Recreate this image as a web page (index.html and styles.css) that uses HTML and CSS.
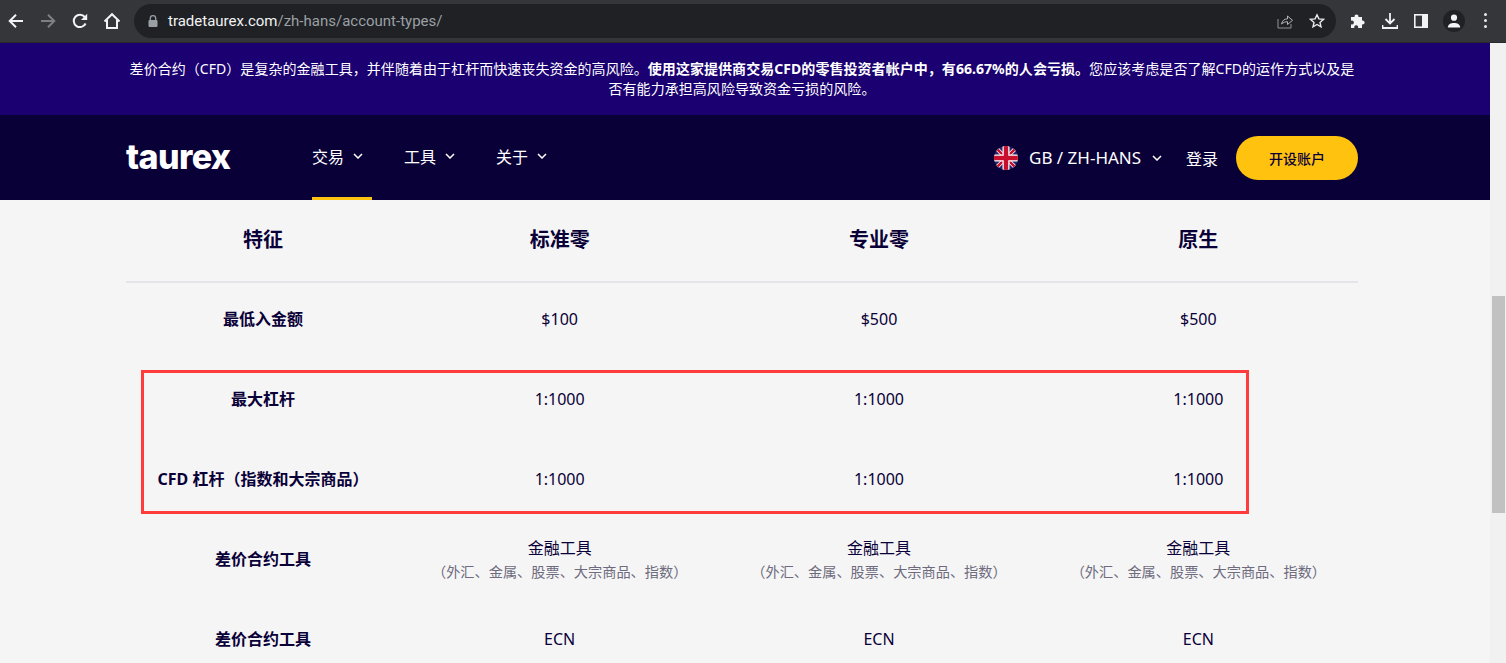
FILE: index.html
```html
<!DOCTYPE html>
<html lang="zh-Hans">
<head>
  <meta charset="UTF-8" />
  <title>Taurex - 账户类型</title>
  <link rel="stylesheet" href="styles.css">
</head>
<body>
  <div class="toolbar">
    <div class="tool-left">
      <svg class="tool" width="18" height="18" viewBox="0 0 18 18"><path d="M16 9H3M9 2.7 2.7 9 9 15.3" fill="none" stroke="#f1f3f4" stroke-width="2"/></svg>
      <svg class="tool" width="18" height="18" viewBox="0 0 18 18"><path d="M2 9h13M9 2.7 15.3 9 9 15.3" fill="none" stroke="#7d7f83" stroke-width="2"/></svg>
      <svg class="tool" width="18" height="18" viewBox="0 0 18 18"><path d="M14.6 11.5A6.2 6.2 0 1 1 13.8 5L15.5 6.8" fill="none" stroke="#f1f3f4" stroke-width="2"/><path d="M16.2 1.8v6.3H10z" fill="#f1f3f4"/></svg>
      <svg class="tool" width="18" height="18" viewBox="0 0 18 18"><path d="M1.5 9.5 9 2.2l7.5 7.3M4 8v8h10V8" fill="none" stroke="#f1f3f4" stroke-width="2"/></svg>
    </div>
    <div class="omnibox">
      <svg class="lock" width="10" height="12" viewBox="0 0 10 12"><path d="M2.3 5V3.4a2.7 2.7 0 0 1 5.4 0V5" fill="none" stroke="#9aa0a6" stroke-width="1.3"/><rect x="0.5" y="5" width="9" height="7" rx="1" fill="#9aa0a6"/></svg>
      <span class="url"><span class="url-host">tradetaurex.com</span>/zh-hans/account-types/</span>
      <svg class="omni-icon" width="16" height="16" viewBox="0 0 16 16"><path d="M1 6v9h13v-4" fill="none" stroke="#8f9398" stroke-width="1"/><path d="M4.500 11c.6-3.300 3-5.200 6-5.200V3l5 4.300-5 4.200V8.700c-2.200 0-4.200.7-6 2.300z" fill="none" stroke="#b5b8bc" stroke-width="1"/></svg>
      <svg class="omni-icon" width="16" height="16" viewBox="0 0 16 16"><path d="m8 1.800 1.900 4.100 4.500.5-3.400 3 1 4.400L8 11.500l-4 2.300 1-4.400-3.400-3 4.500-.5z" fill="none" stroke="#e8eaed" stroke-width="1.400"/></svg>
    </div>
    <div class="tool-right">
      <svg width="16" height="16" viewBox="0 0 16 16"><path d="M1 4h3.600a2 2 0 1 1 3.800 0H12v3.600a2 2 0 1 1 0 3.800V15H8a2 2 0 1 0-3.600 0H1v-3.700a2 2 0 1 0 0-3.600z" fill="#f1f3f4"/></svg>
      <svg width="16" height="16" viewBox="0 0 16 16"><path d="M8 0v10M3.500 6 8 10.500 12.500 6M0.500 12v3h15v-3" fill="none" stroke="#f1f3f4" stroke-width="1.800"/></svg>
      <svg width="14" height="14" viewBox="0 0 14 14"><rect x="0.800" y="0.800" width="12.400" height="12.400" fill="none" stroke="#f1f3f4" stroke-width="1.600"/><rect x="8" y="1" width="5" height="12" fill="#f1f3f4"/></svg>
      <span class="avatar">
        <svg width="14" height="14" viewBox="0 0 14 14"><circle cx="7" cy="3.700" r="3.100" fill="#f1f3f4"/><path d="M.8 13.500c0-3.200 3-4.500 6.200-4.500s6.200 1.300 6.200 4.500z" fill="#f1f3f4"/></svg>
      </span>
      <span class="dots"><i></i><i></i><i></i></span>
    </div>
  </div>

  <div class="viewport">
    <div class="page">
      <div class="risk">
        差价合约（CFD）是复杂的金融工具，并伴随着由于杠杆而快速丧失资金的高风险。<b>使用这家提供商交易CFD的零售投资者帐户中，有66.67%的人会亏损。</b>您应该考虑是否了解CFD的运作方式以及是否有能力承担高风险导致资金亏损的风险。
      </div>

      <div class="nav">
        <span class="logo">taurex</span>
        <div class="menu">
          <a class="menu-item active">交易 <svg class="chev" viewBox="0 0 10 6"><path d="M1 1l4 4 4-4" /></svg></a>
          <a class="menu-item">工具 <svg class="chev" viewBox="0 0 10 6"><path d="M1 1l4 4 4-4" /></svg></a>
          <a class="menu-item">关于 <svg class="chev" viewBox="0 0 10 6"><path d="M1 1l4 4 4-4" /></svg></a>
        </div>
        <div class="nav-right">
          <svg class="flag" width="24" height="24" viewBox="0 0 24 24">
            <defs><clipPath id="flagClip"><circle cx="12" cy="12" r="12"/></clipPath></defs>
            <g clip-path="url(#flagClip)">
              <rect width="24" height="24" fill="#25246b"/>
              <path d="M0 0 24 24M24 0 0 24" stroke="#fff" stroke-width="4"/>
              <path d="M0 0 24 24M24 0 0 24" stroke="#c8102e" stroke-width="2.500"/>
              <path d="M12 0v24M0 12h24" stroke="#fff" stroke-width="7"/>
              <path d="M12 0v24M0 12h24" stroke="#c8102e" stroke-width="4.500"/>
            </g>
          </svg>
          <span class="lang">GB / ZH-HANS</span>
          <svg class="chev" viewBox="0 0 10 6"><path d="M1 1l4 4 4-4" /></svg>
          <a class="login">登录</a>
          <a class="open-btn">开设账户</a>
        </div>
      </div>

      <div class="content">
        <div class="row head">
          <div>特征</div><div>标准零</div><div>专业零</div><div>原生</div>
        </div>
        <div class="row">
          <div class="feature">最低入金额</div><div>$100</div><div>$500</div><div>$500</div>
        </div>
        <div class="row">
          <div class="feature">最大杠杆</div><div>1:1000</div><div>1:1000</div><div>1:1000</div>
        </div>
        <div class="row">
          <div class="feature">CFD 杠杆（指数和大宗商品）</div><div>1:1000</div><div>1:1000</div><div>1:1000</div>
        </div>
        <div class="row">
          <div class="feature">差价合约工具</div>
          <div>金融工具<small>（外汇、金属、股票、大宗商品、指数）</small></div>
          <div>金融工具<small>（外汇、金属、股票、大宗商品、指数）</small></div>
          <div>金融工具<small>（外汇、金属、股票、大宗商品、指数）</small></div>
        </div>
        <div class="row">
          <div class="feature">差价合约工具</div><div>ECN</div><div>ECN</div><div>ECN</div>
        </div>
        <div class="red-box"></div>
      </div>
    </div>
    <div class="scrollbar"><div class="thumb"></div></div>
  </div>
</body>
</html>
```

FILE: styles.css
```css
* { margin: 0; padding: 0; box-sizing: border-box; }
html, body { height: 100%; overflow: hidden; }
body {
  font-family: "Noto Sans", "Noto Sans CJK SC", sans-serif;
  background: #f5f5f5;
  color: #0a0038;
  display: flex;
  flex-direction: column;
}

/* browser toolbar */
.toolbar {
  height: 43px;
  flex: none;
  background: #35363a;
  border-bottom: 1px solid #2a2b2e;
  display: flex;
  align-items: center;
  padding-bottom: 1px;
}
.tool-left {
  width: 134px;
  flex: none;
  display: flex;
  align-items: center;
  gap: 14px;
  padding-left: 7px;
}
.tool { flex: none; }
.omnibox {
  width: 1202px;
  height: 34px;
  flex: none;
  background: #202124;
  border-radius: 17px;
  display: flex;
  align-items: center;
  padding: 0 11px 0 14px;
}
.lock { flex: none; }
.url {
  margin-left: 10px;
  flex: 1;
  font-family: Roboto, sans-serif;
  font-size: 15px;
  color: #9aa0a6;
}
.url-host { color: #f1f3f4; }
.omni-icon { margin-left: 16px; flex: none; }
.tool-right {
  flex: 1;
  display: flex;
  align-items: center;
  gap: 16px;
  padding-left: 14px;
}
.avatar {
  width: 22px;
  height: 22px;
  border-radius: 50%;
  background: #202124;
  display: flex;
  align-items: center;
  justify-content: center;
  margin-left: -1px;
}
.dots {
  display: flex;
  flex-direction: column;
  gap: 3px;
  margin-left: 3px;
}
.dots i {
  display: block;
  width: 3px;
  height: 3px;
  border-radius: 50%;
  background: #e8eaed;
}

/* page area */
.viewport {
  flex: 1;
  min-height: 0;
  display: flex;
}
.page {
  flex: 1;
  min-width: 0;
  overflow: hidden;
}
.scrollbar {
  width: 16px;
  flex: none;
  background: #f1f1f1;
  padding: 253px 1px 0 2px;
}
.thumb {
  height: 217px;
  background: #c1c1c1;
}

.risk {
  height: 72px;
  background: #1a0070;
  color: #fff;
  font-size: 14px;
  letter-spacing: 0.050px;
  line-height: 20px;
  text-align: center;
  padding: 16px 130px 0 124px;
}
.risk b { font-weight: 700; }

.nav {
  height: 85px;
  background: #0a0038;
  color: #fff;
  display: flex;
  align-items: center;
  padding-left: 126px;
  width: 100%;
}
.logo {
  width: 186px;
  flex: none;
  font-family: Inter, sans-serif;
  font-weight: 800;
  font-size: 34px;
  letter-spacing: -0.600px;
  line-height: 1;
  padding-bottom: 2px;
}
.menu {
  display: flex;
  align-self: stretch;
  gap: 32px;
}
.menu-item {
  width: 60px;
  display: flex;
  align-items: center;
  gap: 9px;
  font-size: 16px;
  white-space: nowrap;
  border-bottom: 3px solid transparent;
}
.menu-item.active { border-bottom-color: #ffc20e; }
.chev {
  width: 10px;
  height: 6px;
  flex: none;
  fill: none;
  stroke: #fff;
  stroke-width: 1.500;
}
.nav-right {
  margin-left: auto;
  width: 364px;
  margin-right: 132px;
  flex: none;
  display: flex;
  align-items: center;
}
.flag { flex: none; }
.lang {
  font-size: 17px;
  margin-left: 11px;
  margin-right: 11px;
  white-space: nowrap;
}
.login {
  font-size: 16px;
  margin-left: 24px;
}
.open-btn {
  margin-left: auto;
  width: 122px;
  height: 44px;
  border-radius: 22px;
  background: #ffc20e;
  color: #0a0038;
  font-size: 14px;
  font-weight: 500;
  display: flex;
  align-items: center;
  justify-content: center;
}

/* comparison table */
.content {
  position: relative;
  width: 1232px;
  margin-left: 126px;
}
.row {
  display: grid;
  grid-template-columns: 274px 1fr 1fr 1fr;
  height: 80px;
  align-items: center;
  text-align: center;
  font-size: 16px;
  padding-bottom: 8px;
}
.row.head {
  height: 83px;
  border-bottom: 2px solid #e4e4ea;
  font-size: 20px;
  font-weight: 700;
  padding-bottom: 4px;
}
.row small {
  display: block;
  font-size: 14.200px;
  color: #6d6b7d;
  line-height: 25px;
}
.feature {
  font-weight: 700;
  font-size: 16px;
  padding-bottom: 2px;
}
.red-box {
  position: absolute;
  left: 15px;
  top: 170px;
  width: 1108px;
  height: 144px;
  border: 3px solid #ff3b3b;
}
```
